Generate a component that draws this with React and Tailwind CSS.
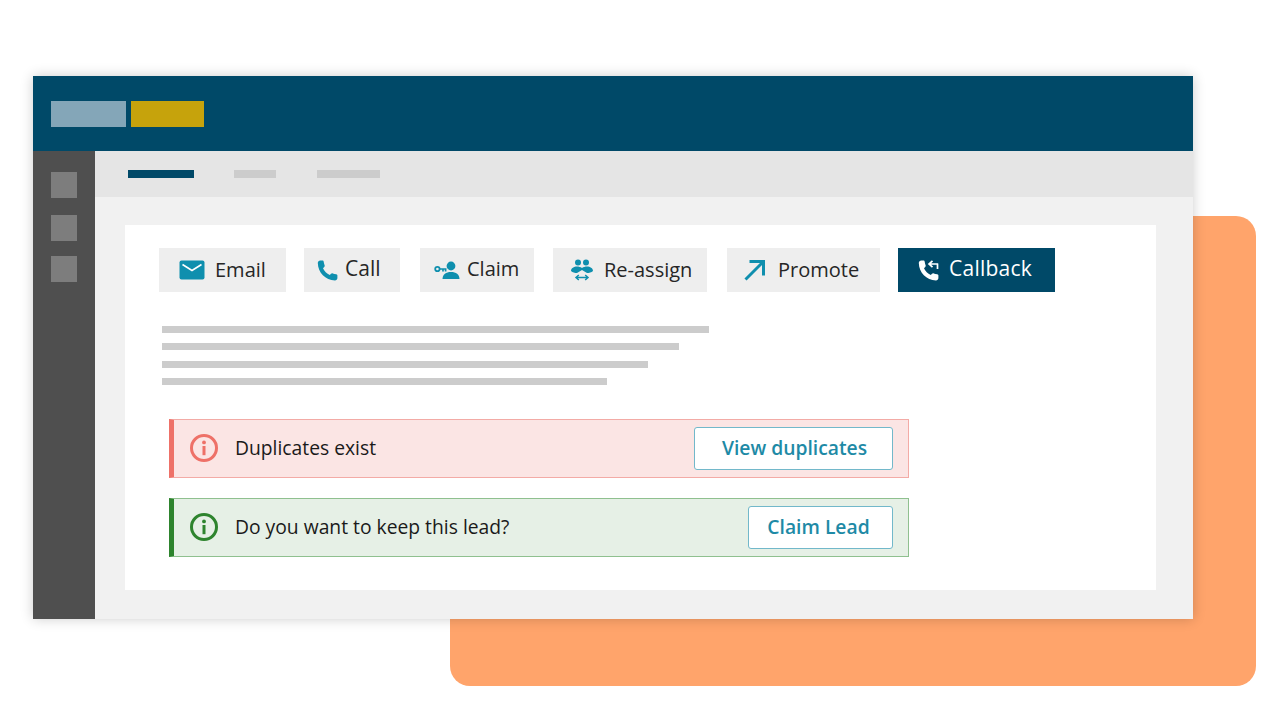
const font = { fontFamily: '"Open Sans", "Noto Sans", sans-serif' };

const MailIcon = () => (
  <svg width="26" height="20" viewBox="0 0 26 20">
    <rect x="0.5" y="0.5" width="25" height="19" rx="2" fill="#0f8fae" />
    <path d="M3.5 4.5 L13 10.5 L22.5 4.5" fill="none" stroke="#fff" strokeWidth="1.6" />
  </svg>
);

const PhoneIcon = ({ color = "#0f8fae", size = 21 }) => (
  <svg width={size} height={size} viewBox="0 0 21 21">
    <path
      d="M.8 3 C.8 1.8 2 .6 3.2 .6 L5.4 .6 C6.2 .6 6.6 1.1 6.7 1.8 C6.9 3.2 7.1 4.2 7.6 5.3 C7.9 6 7.7 6.5 7.2 7 L6 8.2 C7.2 11 9.8 13.6 12.8 15 L14 13.8 C14.5 13.3 15.1 13.1 15.8 13.4 C16.9 13.8 17.9 14.1 19.2 14.3 C20 14.4 20.4 14.9 20.4 15.6 L20.4 18 C20.4 19.2 19.2 20.4 18 20.4 C8.4 20.2 1 12.6 .8 3 Z"
      fill={color}
    />
  </svg>
);

const ClaimIcon = () => (
  <svg width="26" height="18" viewBox="0 0 26 18">
    <circle cx="17" cy="5" r="4.4" fill="#0f8fae" />
    <path d="M8.5 18 C8.5 13.5 12 11 17 11 C22 11 25.5 13.5 25.5 18 Z" fill="#0f8fae" />
    <circle cx="3.4" cy="8" r="2.2" fill="none" stroke="#0f8fae" strokeWidth="1.8" />
    <path d="M5.5 8 H12.5 M9 8 V10.5 M11.6 8 V10.5" fill="none" stroke="#0f8fae" strokeWidth="1.7" />
  </svg>
);

const ReassignIcon = () => (
  <svg width="22" height="22" viewBox="0 0 22 22">
    <circle cx="7" cy="3.4" r="3" fill="#0f8fae" />
    <circle cx="15" cy="3.4" r="3" fill="#0f8fae" />
    <path d="M0 12 C0 9 3 7.5 6 7.5 C7.8 7.5 9.6 8 11 9 C12.4 8 14.2 7.5 16 7.5 C19 7.5 22 9 22 12 C20.5 13.6 18 14 16 14 L11 11 L6 14 C4 14 1.5 13.6 0 12 Z" fill="#0f8fae" />
    <path d="M5.5 18.5 H16.5 M7.8 16 L5 18.5 L7.8 21 M14.2 16 L17 18.5 L14.2 21" fill="none" stroke="#0f8fae" strokeWidth="1.5" />
  </svg>
);

const ArrowIcon = () => (
  <svg width="22" height="22" viewBox="0 0 22 22">
    <path d="M1.5 20.5 L19.5 2.5 M5.5 2.5 H19.5 V16.5" fill="none" stroke="#0f8fae" strokeWidth="3" />
  </svg>
);

const CallbackIcon = () => (
  <div className="relative w-[21px] h-[21px]">
    <PhoneIcon color="#ffffff" />
    <svg className="absolute top-0 left-0" width="21" height="21" viewBox="0 0 21 21">
      <path d="M20 4 H11.5 M14.5 .8 L11 4 L14.5 7.2 M19.5 3.6 V9" fill="none" stroke="#fff" strokeWidth="1.7" />
    </svg>
  </div>
);

const InfoIcon = ({ color }) => (
  <svg width="28" height="28" viewBox="0 0 28 28">
    <circle cx="14" cy="14" r="12.5" fill="none" stroke={color} strokeWidth="3" />
    <circle cx="14" cy="8.4" r="1.9" fill={color} />
    <rect x="12.5" y="12" width="3" height="9.2" fill={color} />
  </svg>
);

const actions = [
  { label: "Email", icon: <MailIcon />, box: "w-[127px] pl-[20px] gap-[10px] mr-[18px]", text: "text-[20px]" },
  { label: "Call", icon: <PhoneIcon />, box: "w-[96px] pl-[13px] gap-[7px] mr-[20px]", text: "text-[21px] pb-[3px]" },
  { label: "Claim", icon: <ClaimIcon />, box: "w-[114px] pl-[14px] gap-[7px] mr-[19px]", text: "text-[20px] pb-[3px]" },
  { label: "Re-assign", icon: <ReassignIcon />, box: "w-[154px] pl-[18px] gap-[11px] mr-[20px]", text: "text-[20px]" },
  { label: "Promote", icon: <ArrowIcon />, box: "w-[153px] pl-[17px] gap-[12px] mr-[18px]", text: "text-[20px]" },
];

const ActionButton = ({ item }) => (
  <div className={`${item.box} h-[44px] bg-[#eeeeee] flex items-center font-[520] text-[#262626]`}>
    {item.icon}
    <span className={item.text}>{item.label}</span>
  </div>
);

const Alert = ({ tone, text, button, btnClass, mb }) => {
  const red = tone === "red";
  return (
    <div
      className={`w-[740px] h-[59px] flex items-center border border-l-[5px] pl-[16px] pr-[15px] ${mb} ${
        red ? "bg-[#fbe5e4] border-[#f3aba6] border-l-[#ee7168]" : "bg-[#e6f0e6] border-[#8fc08f] border-l-[#2e842e]"
      }`}
    >
      <InfoIcon color={red ? "#ee7168" : "#2e842e"} />
      <span className="ml-[17px] text-[19.3px] text-[#1a1a1a] flex-1">{text}</span>
      <div
        className={`${btnClass} h-[43px] bg-white border border-[#72b8ca] rounded-[3px] flex items-center justify-center text-[19.3px] font-semibold text-[#1e8aa6]`}
      >
        {button}
      </div>
    </div>
  );
};

export default function App() {
  return (
    <div className="relative w-[1280px] h-[720px] bg-white overflow-hidden pt-[76px] pl-[33px]" style={font}>
      <div className="absolute left-[450px] top-[216px] w-[806px] h-[470px] rounded-[20px] bg-[#ffa46b]" />

      <div className="relative w-[1160px] h-[543px] flex flex-col bg-[#f1f1f1] shadow-[0_0_12px_rgba(0,0,0,0.2)]">
        <div className="h-[75px] shrink-0 bg-[#004968] flex items-center pl-[18px] gap-[5px]">
          <div className="w-[75px] h-[26px] bg-[#84a6b8]" />
          <div className="w-[73px] h-[26px] bg-[#c6a30c]" />
        </div>

        <div className="flex flex-1">
          <div className="w-[62px] shrink-0 bg-[#4f4f4f] flex flex-col items-center pt-[21px]">
            <div className="w-[26px] h-[26px] bg-[#7d7d7d] mb-[17px]" />
            <div className="w-[26px] h-[26px] bg-[#7d7d7d] mb-[15px]" />
            <div className="w-[26px] h-[26px] bg-[#7d7d7d]" />
          </div>

          <div className="flex-1 flex flex-col">
            <div className="h-[46px] bg-[#e5e5e5] flex items-center pl-[33px]">
              <div className="w-[66px] h-[8px] bg-[#004968] mr-[40px]" />
              <div className="w-[42px] h-[8px] bg-[#cccccc] mr-[41px]" />
              <div className="w-[63px] h-[8px] bg-[#cccccc]" />
            </div>

            <div className="flex-1 pt-[28px] pl-[30px]">
              <div className="w-[1031px] h-[365px] bg-white pt-[23px] pl-[34px]">
                <div className="flex">
                  {actions.map((item) => (
                    <ActionButton key={item.label} item={item} />
                  ))}
                  <div className="w-[157px] h-[44px] bg-[#004968] flex items-center pl-[20px] gap-[10px] font-medium text-white">
                    <CallbackIcon />
                    <span className="text-[21px] tracking-[0.25px] pb-[3px]">Callback</span>
                  </div>
                </div>

                <div className="mt-[34px] ml-[3px] flex flex-col gap-[10.33px]">
                  <div className="w-[547px] h-[7px] bg-[#cccccc]" />
                  <div className="w-[517px] h-[7px] bg-[#cccccc]" />
                  <div className="w-[486px] h-[7px] bg-[#cccccc]" />
                  <div className="w-[445px] h-[7px] bg-[#cccccc]" />
                </div>

                <div className="mt-[34px] ml-[10px]">
                  <Alert tone="red" text="Duplicates exist" button="View duplicates" btnClass="w-[199px] pl-[2px]" mb="mb-[20px]" />
                  <Alert tone="green" text="Do you want to keep this lead?" button="Claim Lead" btnClass="w-[145px] pr-[4px]" mb="" />
                </div>
              </div>
            </div>
          </div>
        </div>
      </div>
    </div>
  );
}
